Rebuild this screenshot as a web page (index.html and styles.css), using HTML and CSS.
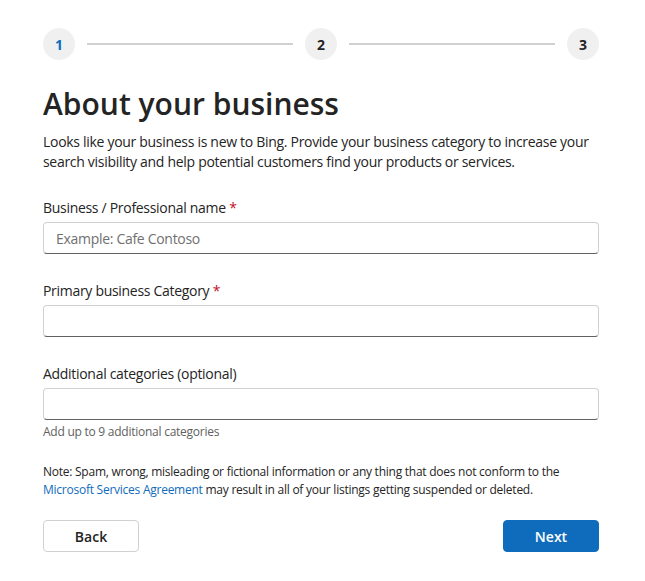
FILE: index.html
```html
<!DOCTYPE html>
<html lang="en">
<head>
  <meta charset="UTF-8">
  <title>About your business</title>
  <link rel="stylesheet" href="styles.css">
</head>
<body>
  <div class="wizard">
    <div class="steps">
      <div class="step active">1</div>
      <div class="step-line"></div>
      <div class="step">2</div>
      <div class="step-line"></div>
      <div class="step">3</div>
    </div>

    <h1>About your business</h1>
    <p class="intro">Looks like your business is new to Bing. Provide your business category to increase your search visibility and help potential customers find your products or services.</p>

    <div class="field">
      <label>Business / Professional name <span class="req">*</span></label>
      <input type="text" placeholder="Example: Cafe Contoso">
    </div>

    <div class="field">
      <label>Primary business Category <span class="req">*</span></label>
      <input type="text">
    </div>

    <div class="field">
      <label>Additional categories (optional)</label>
      <input type="text">
      <div class="hint">Add up to 9 additional categories</div>
    </div>

    <p class="note">Note: Spam, wrong, misleading or fictional information or any thing that does not conform to the <a href="#">Microsoft Services Agreement</a> may result in all of your listings getting suspended or deleted.</p>

    <div class="actions">
      <button class="btn">Back</button>
      <button class="btn primary">Next</button>
    </div>
  </div>
</body>
</html>
```

FILE: styles.css
```css
:root {
  --color-primary: #0f6cbd;
  --color-text: #242424;
  --color-border: #d1d1d1;
}

body {
  margin: 0;
  background: #fff;
  color: var(--color-text);
  font-family: 'Open Sans', 'Noto Sans', sans-serif;
}

.wizard {
  width: 556px;
  padding: 28px 0 0 43px;
}

.steps {
  display: flex;
  align-items: center;
}

.step {
  width: 32px;
  height: 32px;
  border-radius: 50%;
  background: #f0f0f0;
  display: flex;
  align-items: center;
  justify-content: center;
  font-size: 14px;
  font-weight: 700;
  color: var(--color-text);
}

.step.active {
  color: var(--color-primary);
}

.step-line {
  flex: 1;
  height: 2px;
  background: var(--color-border);
  margin: 0 12px;
}

h1 {
  margin: 24px 0 0;
  font-size: 30px;
  font-weight: 600;
  line-height: 40px;
}

.intro {
  margin: 8px 0 0;
  font-size: 14px;
  line-height: 20px;
  letter-spacing: -0.3px;
}

.field {
  margin-top: 26px;
  display: flex;
  flex-direction: column;
}

.field + .field {
  margin-top: 27px;
}

.field label {
  font-size: 14px;
  line-height: 20px;
  letter-spacing: -0.3px;
  margin-bottom: 4px;
}

.req {
  color: #c50f1f;
}

.field input {
  height: 32px;
  box-sizing: border-box;
  border: 1px solid var(--color-border);
  border-bottom-color: #616161;
  border-radius: 4px;
  padding: 0 12px;
  font-family: inherit;
  font-size: 14px;
  letter-spacing: -0.3px;
  color: var(--color-text);
}

.field input::placeholder {
  color: #707070;
}

.hint {
  margin-top: 4px;
  font-size: 12px;
  line-height: 16px;
  letter-spacing: -0.25px;
  color: #616161;
}

.note {
  margin: 23px 0 0;
  font-size: 12px;
  line-height: 18px;
  letter-spacing: -0.25px;
}

.note a {
  color: var(--color-primary);
  text-decoration: none;
}

.actions {
  display: flex;
  justify-content: space-between;
  margin-top: 21px;
}

.btn {
  width: 96px;
  height: 32px;
  border: 1px solid var(--color-border);
  border-radius: 4px;
  background: #fff;
  color: var(--color-text);
  font-family: inherit;
  font-size: 14px;
  font-weight: 600;
  cursor: pointer;
}

.btn.primary {
  background: var(--color-primary);
  border-color: var(--color-primary);
  color: #fff;
}
```
